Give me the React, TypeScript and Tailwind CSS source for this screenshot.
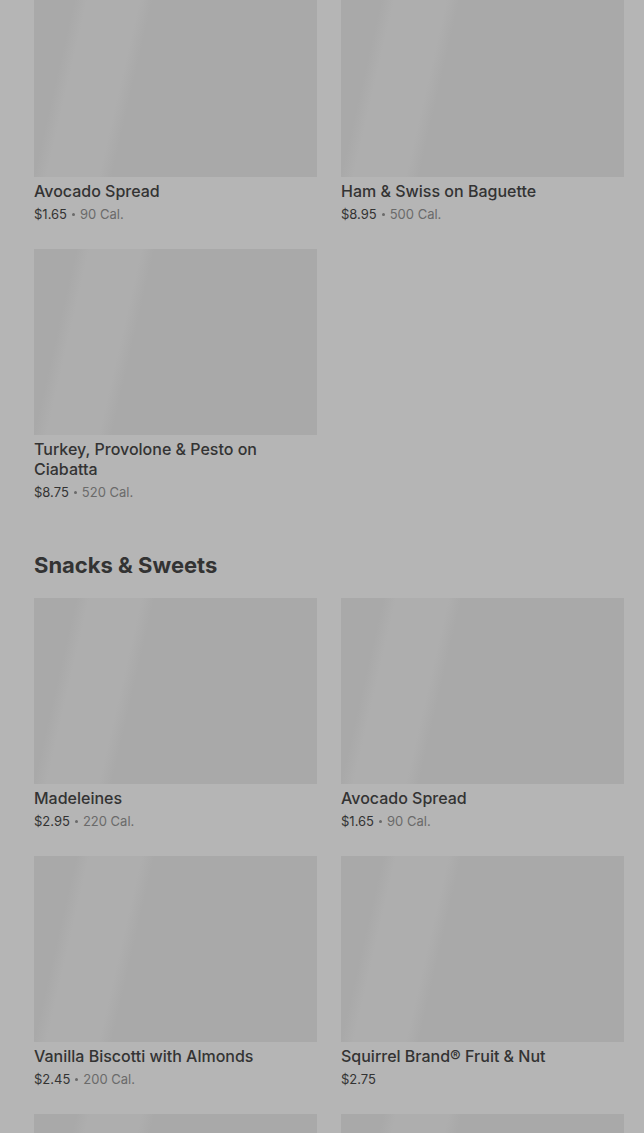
import React from 'react';

interface Item {
  name: string;
  price: string;
  cal?: string;
}

const topItems: Item[] = [
  { name: 'Avocado Spread', price: '$1.65', cal: '90 Cal.' },
  { name: 'Ham & Swiss on Baguette', price: '$8.95', cal: '500 Cal.' },
  { name: 'Turkey, Provolone & Pesto on Ciabatta', price: '$8.75', cal: '520 Cal.' },
];

const snacks: Item[] = [
  { name: 'Madeleines', price: '$2.95', cal: '220 Cal.' },
  { name: 'Avocado Spread', price: '$1.65', cal: '90 Cal.' },
  { name: 'Vanilla Biscotti with Almonds', price: '$2.45', cal: '200 Cal.' },
  { name: 'Squirrel Brand® Fruit & Nut', price: '$2.75' },
  { name: 'Chocolate Chip Cookie', price: '$2.25', cal: '380 Cal.' },
  { name: 'Kettle Chips', price: '$1.95', cal: '220 Cal.' },
];

function ItemCard({ item }: { item: Item }) {
  return (
    <div className="flex flex-col">
      <div className="h-[186px] w-full bg-[#a9a9a9] bg-[linear-gradient(103deg,#a9a9a9_13%,#aeaeae_17%,#aeaeae_33%,#a9a9a9_37%)]" />
      <div className="mt-1 text-base leading-5 font-medium text-[#333333]">{item.name}</div>
      <div className="mt-[3px] flex h-5 items-center gap-[5px] text-[13px] leading-5 text-[#333333]">
        <span>{item.price}</span>
        {item.cal && (
          <>
            <span className="h-[3px] w-[3px] rounded-full bg-[#6a6a6a]" />
            <span className="text-[#6a6a6a]">{item.cal}</span>
          </>
        )}
      </div>
    </div>
  );
}

export default function App() {
  return (
    <div
      className="min-h-screen overflow-hidden bg-[#b5b5b5] pl-[34px] pr-[20px]"
      style={{ fontFamily: 'Inter, "Noto Sans", sans-serif' }}
    >
      <div className="-mt-[9px] grid grid-cols-2 gap-x-6 gap-y-[25px]">
        {topItems.map((item, i) => (
          <ItemCard key={i} item={item} />
        ))}
      </div>

      <h2 className="mt-[47px] mb-[17px] text-[22px] leading-8 font-bold text-[#333333]">
        Snacks &amp; Sweets
      </h2>
      <div className="grid grid-cols-2 gap-x-6 gap-y-[25px] pb-10">
        {snacks.map((item, i) => (
          <ItemCard key={i} item={item} />
        ))}
      </div>
    </div>
  );
}
